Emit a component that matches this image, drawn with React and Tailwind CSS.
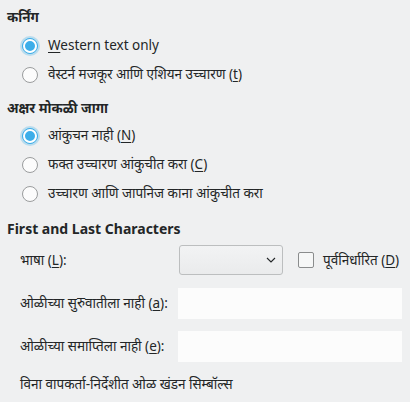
const Radio = ({ checked }) =>
  checked ? (
    <span className="flex h-4 w-4 shrink-0 items-center justify-center rounded-full border border-[#3daee9] bg-[#3daee9] shadow-[0_0_0_2px_rgba(61,174,233,0.3)]">
      <span className="h-[10px] w-[10px] rounded-full bg-[#3daee9] border-2 border-white box-content" />
    </span>
  ) : (
    <span className="h-4 w-4 shrink-0 rounded-full border border-[#9a9c9d] bg-[#fcfcfc]" />
  );

const RadioRow = ({ checked, children }) => (
  <div className="flex h-[29px] items-center gap-[10px] pl-[15px]">
    <Radio checked={checked} />
    <span>{children}</span>
  </div>
);

const U = ({ children }) => <span className="underline underline-offset-2">{children}</span>;

export default function App() {
  return (
    <div
      className="h-[402px] w-[410px] overflow-hidden bg-[#eff0f1] text-[13.5px] text-[#232627]"
      style={{ fontFamily: '"Noto Sans", "Open Sans", sans-serif' }}
    >
      <div className="px-[7px] pt-[7px]">
        <div className="flex h-[20px] items-center font-bold">कर्निंग</div>
        <div className="mt-[4px]">
          <RadioRow checked>
            <U>W</U>estern text only
          </RadioRow>
          <RadioRow>
            वेस्टर्न मजकूर आणि एशियन उच्चारण (<U>t</U>)
          </RadioRow>
        </div>

        <div className="mt-[9px] flex h-[20px] items-center font-bold">अक्षर मोकळी जागा</div>
        <div className="mt-[3px]">
          <RadioRow checked>
            आंकुचन नाही (<U>N</U>)
          </RadioRow>
          <RadioRow>
            फक्त उच्चारण आंकुचीत करा (<U>C</U>)
          </RadioRow>
          <RadioRow>उच्चारण आणि जापनिज काना आंकुचीत करा</RadioRow>
        </div>

        <div className="mt-[9px] flex h-[22px] items-center text-[14px] font-bold">First and Last Characters</div>

        <div className="mt-[6px] flex h-[30px] items-center">
          <span className="w-[172px] pl-[13px]">
            भाषा (<U>L</U>):
          </span>
          <div className="flex h-[30px] w-[104px] items-center justify-end rounded-[3px] border border-[#bcbebf] bg-gradient-to-b from-[#f2f3f4] to-[#eaebec] pr-[6px]">
            <svg width="10" height="6" viewBox="0 0 10 6" fill="none">
              <path d="M1 1l4 4 4-4" stroke="#232627" strokeWidth="1.1" />
            </svg>
          </div>
          <span className="ml-[15px] h-4 w-4 rounded-[2px] border border-[#8a8c8d] bg-[#f6f7f7]" />
          <span className="ml-[9px]">
            पूर्वनिर्धारित (<U>D</U>)
          </span>
        </div>

        <div className="mt-[13px] flex h-[31px] items-center">
          <span className="w-[171px] pl-[13px]">
            ओळीच्या सुरुवातीला नाही (<U>a</U>):
          </span>
          <div className="h-[31px] w-[224px] bg-[#fcfcfc]" />
        </div>

        <div className="mt-[12px] flex h-[31px] items-center">
          <span className="w-[171px] pl-[13px]">
            ओळीच्या समाप्तिला नाही (<U>e</U>):
          </span>
          <div className="h-[31px] w-[224px] bg-[#fcfcfc]" />
        </div>

        <div className="mt-[11px] flex h-[22px] items-center pl-[13px]">विना वापकर्ता-निर्देशीत ओळ खंडन सिम्बॉल्स</div>
      </div>
    </div>
  );
}
